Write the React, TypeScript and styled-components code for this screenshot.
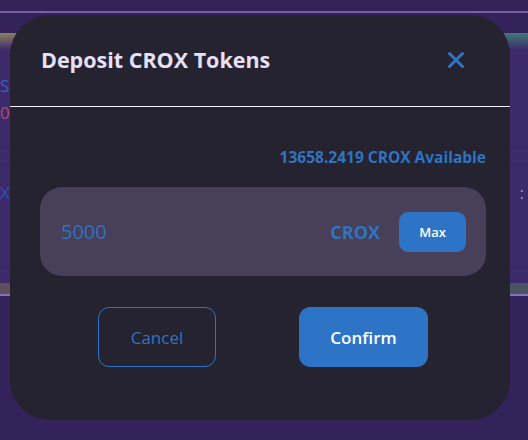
import React from "react";
import styled, { createGlobalStyle } from "styled-components";

const Global = createGlobalStyle`
  html, body { margin: 0; padding: 0; }
  body {
    width: 528px;
    height: 440px;
    overflow: hidden;
    background: #33235a;
    font-family: "Open Sans", "Noto Sans", sans-serif;
  }
`;

const Page = styled.div`
  position: relative;
  width: 528px;
  height: 440px;
  display: flex;
  flex-direction: column;
  padding-top: 11px;
  box-sizing: border-box;
`;

const TopRule = styled.div`
  height: 2px;
  background: #7760a6;
`;

const BackCard = styled.div`
  margin-top: 20px;
  display: flex;
  flex-direction: column;
  background: #3d2a6a;
  border-bottom: 2px solid #8a70b8;
`;

const BackGlow = styled.div`
  height: 17px;
  background: linear-gradient(
      180deg,
      rgba(61, 42, 106, 0) 0%,
      rgba(61, 42, 106, 1) 100%
    ),
    linear-gradient(90deg, #8e8160 0%, #5b4c74 50%, #3f7a78 100%);
`;

const BackRow = styled.div<{ $h: number; $line?: boolean }>`
  height: ${(p) => p.$h}px;
  display: flex;
  align-items: center;
  justify-content: space-between;
  padding: 0 4px 0 0;
  border-bottom: ${(p) => (p.$line ? "1px solid #34245e" : "none")};
  font-size: 17px;
  box-sizing: border-box;
`;

const BackText = styled.span<{ $c: string }>`
  color: ${(p) => p.$c};
  margin-left: 0;
`;

const BackFoot = styled.div`
  height: 11px;
  background: linear-gradient(90deg, #5e4f5c 0%, #4b4660 60%, #4a5462 100%);
`;

const Overlay = styled.div`
  position: absolute;
  left: 10px;
  top: 15px;
  width: 500px;
  height: 405px;
  border-radius: 40px;
  background: #24232f;
  display: flex;
  flex-direction: column;
`;

const Header = styled.div`
  height: 89px;
  display: flex;
  align-items: center;
  justify-content: space-between;
  padding: 0 45px 2px 31px;
  border-bottom: 1.5px solid #f2eefa;
`;

const Title = styled.h2`
  margin: 0;
  font-size: 21.5px;
  font-weight: 700;
  color: #e7e0f7;
`;

const CloseButton = styled.button`
  background: none;
  border: none;
  padding: 0;
  display: flex;
  color: #2f74c2;
`;

const Body = styled.div`
  display: flex;
  flex-direction: column;
  padding: 40px 24px 0 30px;
`;

const Available = styled.div`
  align-self: flex-end;
  font-size: 15.5px;
  font-weight: 700;
  color: #2f74c2;
  line-height: 20px;
`;

const InputBox = styled.div`
  margin-top: 20px;
  height: 89px;
  border-radius: 22px;
  background: #483f58;
  display: flex;
  align-items: center;
  padding: 0 20px 0 21px;
`;

const Amount = styled.span`
  flex: 1;
  font-size: 20px;
  font-weight: 400;
  color: #2f72c0;
`;

const Unit = styled.span`
  font-size: 18px;
  font-weight: 700;
  color: #2f74c2;
  margin-right: 19px;
`;

const MaxButton = styled.button`
  width: 67px;
  height: 40px;
  border: none;
  border-radius: 9px;
  background: #2e74c6;
  color: #ffffff;
  font-family: inherit;
  font-size: 13px;
  font-weight: 600;
`;

const Actions = styled.div`
  margin-top: 31px;
  display: flex;
  justify-content: center;
  gap: 83px;
`;

const ActionButton = styled.button<{ $primary?: boolean }>`
  width: ${(p) => (p.$primary ? 129 : 118)}px;
  height: 60px;
  border-radius: 11px;
  font-family: inherit;
  font-size: 17px;
  font-weight: ${(p) => (p.$primary ? 600 : 400)};
  border: 1px solid #2f74c2;
  background: ${(p) => (p.$primary ? "#2e74c6" : "transparent")};
  color: ${(p) => (p.$primary ? "#ffffff" : "#2f74c2")};
  box-sizing: border-box;
`;

export default function App() {
  return (
    <>
      <Global />
      <Page>
        <TopRule />
        <BackCard>
          <BackGlow />
          <BackRow $h={20} />
          <BackRow $h={30}>
            <BackText $c="#3b5fc8">S</BackText>
          </BackRow>
          <BackRow $h={24}>
            <BackText $c="#b04a78">0</BackText>
          </BackRow>
          <BackRow $h={24} $line />
          <BackRow $h={17} $line />
          <BackRow $h={55}>
            <BackText $c="#3050b8">X</BackText>
            <BackText $c="#a08ad0">:</BackText>
          </BackRow>
          <BackRow $h={48} $line />
          <BackRow $h={15} />
          <BackFoot />
        </BackCard>
        <Overlay>
          <Header>
            <Title>Deposit CROX Tokens</Title>
            <CloseButton aria-label="close">
              <svg width="18" height="18" viewBox="0 0 18 18">
                <path
                  d="M2.5 2.5 L15.5 15.5 M15.5 2.5 L2.5 15.5"
                  stroke="currentColor"
                  strokeWidth="3"
                  strokeLinecap="round"
                />
              </svg>
            </CloseButton>
          </Header>
          <Body>
            <Available>13658.2419 CROX Available</Available>
            <InputBox>
              <Amount>5000</Amount>
              <Unit>CROX</Unit>
              <MaxButton>Max</MaxButton>
            </InputBox>
            <Actions>
              <ActionButton>Cancel</ActionButton>
              <ActionButton $primary>Confirm</ActionButton>
            </Actions>
          </Body>
        </Overlay>
      </Page>
    </>
  );
}
